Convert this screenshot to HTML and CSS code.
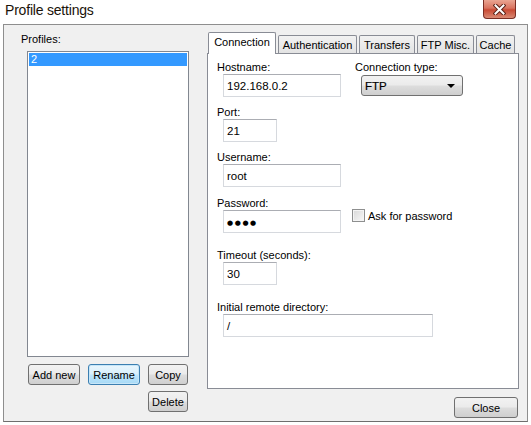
FILE: index.html
```html
<!DOCTYPE html>
<html>
<head>
<meta charset="utf-8">
<link rel="stylesheet" href="styles.css">
</head>
<body>
<div class="titlebar">
  <span class="title">Profile settings</span>
  <div class="close-btn">
    <svg width="13" height="11" viewBox="0 0 13 11">
      <path d="M2.5 1.5 L10.5 9.5 M10.5 1.5 L2.5 9.5" stroke="#5b2218" stroke-width="4" stroke-linecap="square"/>
      <path d="M2.5 1.5 L10.5 9.5 M10.5 1.5 L2.5 9.5" stroke="#ffffff" stroke-width="2" stroke-linecap="square"/>
    </svg>
  </div>
</div>
<div class="frame">
  <div class="left">
    <div class="lbl profiles-lbl">Profiles:</div>
    <div class="listbox">
      <div class="item sel">2</div>
    </div>
    <div class="btnrow">
      <div class="btn w52">Add new</div>
      <div class="btn w52 focus">Rename</div>
      <div class="btn w40">Copy</div>
    </div>
    <div class="btnrow second">
      <div class="btn w40">Delete</div>
    </div>
  </div>
  <div class="right">
    <div class="tabs">
      <div class="tab active t-conn">Connection</div>
      <div class="tab t-auth">Authentication</div>
      <div class="tab t-trans">Transfers</div>
      <div class="tab t-ftp">FTP Misc.</div>
      <div class="tab t-cache">Cache</div>
    </div>
    <div class="panel">
      <div class="row">
        <div class="field">
          <div class="lbl">Hostname:</div>
          <div class="input w118">192.168.0.2</div>
        </div>
        <div class="field ctype">
          <div class="lbl">Connection type:</div>
          <div class="select"><span>FTP</span><span class="arrow"></span></div>
        </div>
      </div>
      <div class="field gap8">
        <div class="lbl">Port:</div>
        <div class="input w54">21</div>
      </div>
      <div class="field gap8">
        <div class="lbl">Username:</div>
        <div class="input w118">root</div>
      </div>
      <div class="row gap9">
        <div class="field">
          <div class="lbl">Password:</div>
          <div class="input w118 pass">●●●●</div>
        </div>
        <div class="check">
          <span class="box"></span>
          <span>Ask for password</span>
        </div>
      </div>
      <div class="field gap15">
        <div class="lbl">Timeout (seconds):</div>
        <div class="input w54">30</div>
      </div>
      <div class="field gap15">
        <div class="lbl">Initial remote directory:</div>
        <div class="input w210">/</div>
      </div>
    </div>
    <div class="footer">
      <div class="btn w64">Close</div>
    </div>
  </div>
</div>
</body>
</html>
```
FILE: styles.css
```css
* { box-sizing: border-box; }

body {
  margin: 0;
  width: 531px;
  height: 425px;
  background: #ffffff;
  font-family: "Liberation Sans", Arial, sans-serif;
  font-size: 11px;
  color: #000;
  overflow: hidden;
}

.titlebar {
  height: 24px;
  display: flex;
  justify-content: space-between;
  align-items: flex-start;
}

.title {
  font-size: 14px;
  letter-spacing: -0.2px;
  line-height: 18px;
  padding: 1px 0 0 5px;
  color: #1a1208;
}

.close-btn {
  width: 33px;
  height: 19px;
  margin-right: 15px;
  border: 1px solid #7a2e24;
  border-top: none;
  border-radius: 0 0 4px 4px;
  background: linear-gradient(#eaa592 0%, #d9735f 45%, #c94a34 55%, #d98a74 100%);
  display: flex;
  align-items: center;
  justify-content: center;
}

.frame {
  margin: 0 3px 0 3px;
  height: 398px;
  border: 1px solid #8e8e8e;
  border-bottom-color: #6e6e6e;
  background: #f0f0f0;
  display: flex;
}

.left {
  width: 203px;
  display: flex;
  flex-direction: column;
}

.lbl {
  line-height: 14px;
  height: 14px;
  white-space: nowrap;
}

.profiles-lbl {
  margin: 7px 0 5px 17px;
}

.listbox {
  margin-left: 23px;
  width: 162px;
  height: 306px;
  border: 1px solid #828790;
  background: #fff;
  padding: 1px;
}

.item {
  height: 13px;
  line-height: 13px;
  padding-left: 2px;
}

.item.sel {
  background: #3399ff;
  color: #fff;
}

.btnrow {
  display: flex;
  gap: 8px;
  margin: 7px 0 0 24px;
}

.btnrow.second {
  margin: 6px 0 0 144px;
}

.btn {
  height: 21px;
  border: 1px solid #707070;
  border-radius: 3px;
  background: linear-gradient(#f2f2f2 0%, #ebebeb 48%, #dddddd 52%, #cfcfcf 100%);
  display: flex;
  align-items: center;
  justify-content: center;
  white-space: nowrap;
}

.btn.focus {
  border-color: #3c7fb1;
  background: linear-gradient(#eaf6fd 0%, #d9f0fc 48%, #bee6fd 52%, #a7d9f5 100%);
  box-shadow: inset 0 0 0 1px #c7e6f8;
}

.w40 { width: 40px; }
.w52 { width: 52px; }
.w64 { width: 64px; }

.right {
  width: 312px;
  display: flex;
  flex-direction: column;
}

.tabs {
  display: flex;
  align-items: flex-end;
  height: 22px;
  margin-top: 6px;
  padding-left: 2px;
  gap: 2px;
}

.tab {
  height: 18px;
  border: 1px solid #898c95;
  border-bottom: none;
  border-radius: 2px 2px 0 0;
  background: linear-gradient(#f2f2f2, #e3e3e3);
  display: flex;
  align-items: center;
  justify-content: center;
  white-space: nowrap;
}

.t-conn { width: 68px; }
.t-auth { width: 79px; }
.t-trans { width: 56px; }
.t-ftp { width: 57px; }
.t-cache { width: 39px; }

.tab.active {
  height: 22px;
  margin: 0 0 -1px -1px;
  padding-bottom: 3px;
  background: #ffffff;
  position: relative;
  z-index: 1;
}

.panel {
  height: 336px;
  border: 1px solid #898c95;
  background: #ffffff;
  padding: 6px 0 0 9px;
}

.row {
  display: flex;
}

.field {
  display: flex;
  flex-direction: column;
}

.ctype {
  margin-left: 14px;
}

.gap8 { margin-top: 8px; }
.gap9 { margin-top: 9px; }
.gap15 { margin-top: 15px; }

.input {
  margin-left: 6px;
  height: 23px;
  border: 1px solid #d6d9de;
  border-top-color: #abadb3;
  background: #fff;
  padding: 0 3px;
  display: flex;
  align-items: center;
  font-size: 11.5px;
}

.input.pass {
  font-family: "DejaVu Sans", sans-serif;
  font-size: 7px;
  letter-spacing: 1.6px;
  padding-top: 2px;
}

.w54 { width: 54px; }
.w118 { width: 118px; }
.w210 { width: 210px; }

.select {
  margin: 1px 0 0 6px;
  width: 102px;
  height: 21px;
  border: 1px solid #707070;
  border-radius: 3px;
  background: linear-gradient(#f2f2f2 0%, #ebebeb 48%, #dddddd 52%, #cfcfcf 100%);
  display: flex;
  align-items: center;
  justify-content: space-between;
  padding: 0 7px 0 3px;
  font-size: 11.5px;
  -webkit-text-stroke: 0.2px #000;
}

.arrow {
  width: 0;
  height: 0;
  border-left: 4px solid transparent;
  border-right: 4px solid transparent;
  border-top: 4px solid #000;
}

.check {
  display: flex;
  align-items: center;
  gap: 3px;
  margin: 13px 0 0 11px;
  height: 13px;
  white-space: nowrap;
}

.box {
  width: 13px;
  height: 13px;
  border: 1px solid #8e8f8f;
  background: linear-gradient(135deg, #d8d8d8, #f8f8f8);
  box-shadow: inset 0 0 0 1px #f4f4f4;
}

.footer {
  display: flex;
  justify-content: flex-end;
  margin: 8px 1px 0 0;
}
```
